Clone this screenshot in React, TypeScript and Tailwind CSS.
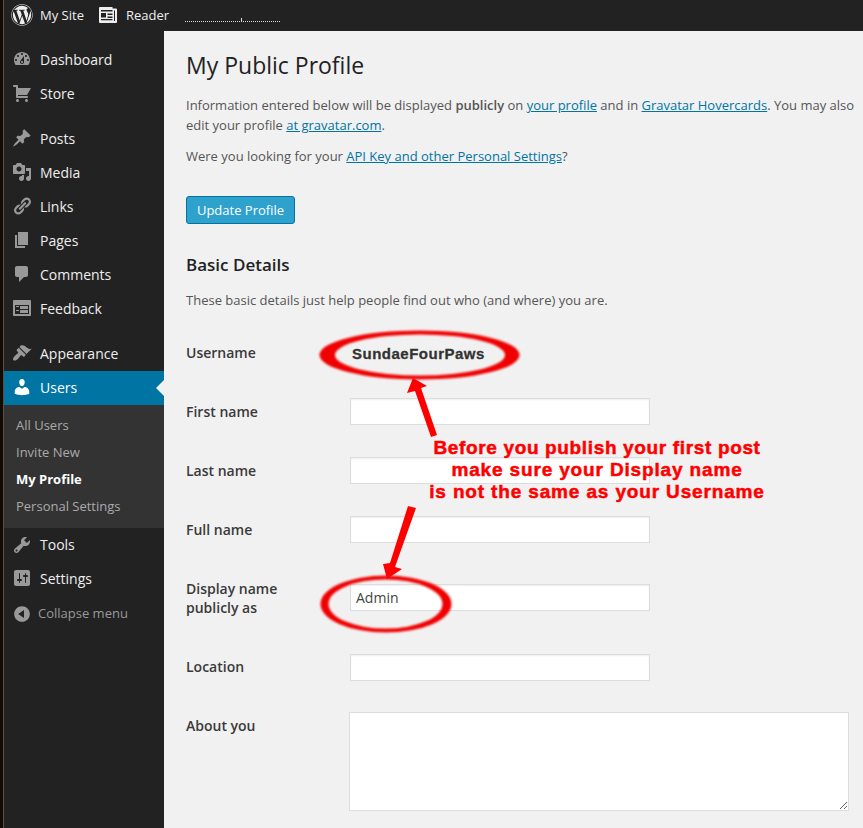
import React from "react";
import { FaWordpress } from "react-icons/fa";

const P: Record<string, string> = {
  dashboard: "M3.76 16h12.48c1.1-1.37 1.76-3.11 1.76-5 0-4.42-3.58-8-8-8s-8 3.58-8 8c0 1.89.66 3.63 1.76 5zM10 4c.55 0 1 .45 1 1s-.45 1-1 1-1-.45-1-1 .45-1 1-1zM6 6c.55 0 1 .45 1 1s-.45 1-1 1-1-.45-1-1 .45-1 1-1zm8 0c.55 0 1 .45 1 1s-.45 1-1 1-1-.45-1-1 .45-1 1-1zm-5.37 5.55L12 7v6c0 1.1-.9 2-2 2s-2-.9-2-2c0-.57.24-1.08.63-1.45zM4 10c.55 0 1 .45 1 1s-.45 1-1 1-1-.45-1-1 .45-1 1-1zm12 0c.55 0 1 .45 1 1s-.45 1-1 1-1-.45-1-1 .45-1 1-1zm-5 3c0-.55-.45-1-1-1s-1 .45-1 1 .45 1 1 1 1-.45 1-1z",
  cart: "M6 13h9c.55 0 1 .45 1 1s-.45 1-1 1H5c-.55 0-1-.45-1-1V4H2c-.55 0-1-.45-1-1s.45-1 1-1h3c.55 0 1 .45 1 1v2h13l-4 7H6v1zm-.5 3c.83 0 1.5.67 1.5 1.5S6.33 19 5.5 19 4 18.33 4 17.5 4.67 16 5.5 16zm9 0c.83 0 1.5.67 1.5 1.5s-.67 1.5-1.5 1.5-1.5-.67-1.5-1.5.67-1.5 1.5-1.5z",
  post: "M10.44 3.02l1.82-1.82 6.36 6.35-1.83 1.82c-1.05-.68-2.48-.57-3.41.36l-.75.75c-.92.93-1.04 2.35-.35 3.41l-1.83 1.82-2.41-2.41-2.8 2.79c-.42.42-3.38 2.71-3.8 2.29s1.86-3.39 2.28-3.81l2.79-2.79L4.1 9.36l1.83-1.82c1.05.69 2.48.57 3.4-.36l.75-.75c.93-.92 1.05-2.35.36-3.41z",
  media: "M13 11V4c0-.55-.45-1-1-1h-1.67L9 1H5L3.67 3H2c-.55 0-1 .45-1 1v7c0 .55.45 1 1 1h10c.55 0 1-.45 1-1zM7 4.5c1.38 0 2.5 1.12 2.5 2.5S8.38 9.5 7 9.5 4.5 8.38 4.5 7 5.62 4.5 7 4.5zM14 6h5v10.5c0 1.38-1.12 2.5-2.5 2.5S14 17.88 14 16.5s1.12-2.5 2.5-2.5c.17 0 .34.02.5.05V9h-3V6zm-4 8.05V13h2v3.5c0 1.38-1.12 2.5-2.5 2.5S7 17.88 7 16.5 8.12 14 9.5 14c.17 0 .34.02.5.05z",
  links: "M17.74 2.76c1.68 1.69 1.68 4.41 0 6.1l-1.53 1.52c-1.12 1.12-2.7 1.47-4.14 1.09l2.62-2.61.76-.77.76-.76c.84-.84.84-2.2 0-3.04-.84-.85-2.2-.85-3.04 0l-.77.76-3.38 3.38c-.37-1.44-.02-3.02 1.1-4.14l1.52-1.53c1.69-1.68 4.42-1.68 6.1 0zM8.59 13.43l5.34-5.34c.42-.42.42-1.1 0-1.52-.44-.43-1.13-.39-1.53 0l-5.33 5.34c-.42.42-.42 1.1 0 1.52.44.43 1.13.39 1.52 0zm-.76 2.29l4.14-4.15c.38 1.44.03 3.02-1.09 4.14l-1.52 1.53c-1.69 1.68-4.41 1.68-6.1 0-1.68-1.68-1.68-4.42 0-6.1l1.53-1.52c1.12-1.12 2.7-1.47 4.14-1.1l-4.14 4.15c-.85.84-.85 2.2 0 3.05.84.84 2.2.84 3.04 0z",
  page: "M6 15V2h10v13H6zm-1 1h8v2H3V5h2v11z",
  comments: "M5 2h9c1.1 0 2 .9 2 2v7c0 1.1-.9 2-2 2h-2l-5 5v-5H5c-1.1 0-2-.9-2-2V4c0-1.1.9-2 2-2z",
  feedback: "M2 2h16c.55 0 1 .45 1 1v14c0 .55-.45 1-1 1H2c-.55 0-1-.45-1-1V3c0-.55.45-1 1-1zm15 14V7H3v9h14zM4 8v1h3V8H4zm4 0v3h8V8H8zm-4 4v1h3v-1H4zm4 0v3h8v-3H8z",
  appearance: "M14.48 11.06L7.41 3.99l1.5-1.5c.5-.56 2.3-.47 3.51.32 1.21.8 1.43 1.28 2.91 2.1 1.18.64 2.45 1.26 4.45.85zm-.71.71L6.7 4.7 4.93 6.47c-.39.39-.39 1.02 0 1.41l1.06 1.06c.39.39.39 1.03 0 1.42-.6.6-1.43 1.11-2.21 1.69-.35.26-.7.53-1.01.84-1.35 1.34-1.77 2.71-1.77 3.61 0 .5 1 1 1.5 1 .9 0 2.3-.42 3.6-1.77.31-.31.58-.66.84-1.01.58-.78 1.09-1.61 1.69-2.21.39-.39 1.02-.39 1.41 0l1.06 1.06c.39.39 1.02.39 1.41 0z",
  users: "M10 9.25c-2.27 0-2.73-3.44-2.73-3.44C7 4.02 7.82 2 9.97 2c2.16 0 2.98 2.02 2.71 3.81 0 0-.41 3.44-2.68 3.44zm0 2.57L12.72 10c2.39 0 4.52 2.33 4.52 4.53v2.49s-3.65 1.13-7.24 1.13c-3.65 0-7.24-1.13-7.24-1.13v-2.49c0-2.25 1.94-4.48 4.47-4.48z",
  tools: "M16.68 9.77c-1.34 1.34-3.3 1.67-4.95.99l-5.41 6.52c-.99.99-2.59.99-3.58 0s-.99-2.59 0-3.57l6.52-5.42c-.68-1.65-.35-3.61.99-4.95 1.28-1.28 3.12-1.62 4.72-1.06l-2.89 2.89 2.82 2.82 2.86-2.87c.53 1.58.18 3.39-1.08 4.65zM3.81 16.21c.4.39 1.04.39 1.43 0 .4-.4.4-1.04 0-1.43-.39-.4-1.03-.4-1.43 0-.39.39-.39 1.03 0 1.43z",
  settings: "M18 16V4c0-1.1-.9-2-2-2H4c-1.1 0-2 .9-2 2v12c0 1.1.9 2 2 2h12c1.1 0 2-.9 2-2zM8 11h1c.55 0 1 .45 1 1s-.45 1-1 1H8v1.5c0 .28-.22.5-.5.5s-.5-.22-.5-.5V13H6c-.55 0-1-.45-1-1s.45-1 1-1h1V5.5c0-.28.22-.5.5-.5s.5.22.5.5V11zm5-2h-1c-.55 0-1-.45-1-1s.45-1 1-1h1V5.5c0-.28.22-.5.5-.5s.5.22.5.5V7h1c.55 0 1 .45 1 1s-.45 1-1 1h-1v5.5c0 .28-.22.5-.5.5s-.5-.22-.5-.5V9z",
  collapse: "M10 2.16c4.33 0 7.84 3.51 7.84 7.84s-3.51 7.84-7.84 7.84S2.16 14.33 2.16 10 5.71 2.16 10 2.16zm2 11.72V6.12L6.18 9.97z",
};

function Icon({ n, className }: { n: string; className: string }) {
  return (
    <svg viewBox="0 0 20 20" className={"w-5 h-5 shrink-0 fill-current " + className}>
      <path d={P[n]} />
    </svg>
  );
}

function MenuItem({ icon, label, className = "h-[34px]" }: { icon: string; label: string; className?: string }) {
  return (
    <div className={"flex items-center pl-2 gap-2 text-[14px] text-[#eeeeee] " + className}>
      <Icon n={icon} className="text-[#999999]" />
      <span>{label}</span>
    </div>
  );
}

const labelCls = "w-[164px] shrink-0 pt-[4px] text-[14px] font-semibold text-[#3a3a3a] leading-[20px]";
const inputCls = "block w-[300px] h-[27px] bg-white border border-[#dddddd] shadow-[inset_0_1px_2px_rgba(0,0,0,0.07)] outline-none text-[14px] text-[#444444] px-[5px]";

function Field({ label, labelClass = "" }: { label: string; labelClass?: string }) {
  return (
    <div className="flex h-[27px]">
      <label className={labelCls + " " + labelClass}>{label}</label>
      <input className={inputCls} readOnly />
    </div>
  );
}

const ring = (cx: number, cy: number, rx: number, ry: number) =>
  `M${cx - rx} ${cy}a${rx} ${ry} 0 1 0 ${2 * rx} 0a${rx} ${ry} 0 1 0 ${-2 * rx} 0z`;

export default function App() {
  return (
    <div className="relative w-[863px] h-[828px] overflow-hidden flex bg-[#222222] font-['Open_Sans',sans-serif]">
      <div className="w-[4px] shrink-0 bg-[#0c0c0c] border-r border-[#6b4a24]" />
      <div className="flex-1 flex flex-col min-w-0">
        <header className="h-[31px] shrink-0 relative flex items-center text-[13px] text-[#eeeeee] bg-[#222222]">
          <FaWordpress className="ml-[7px] w-[22px] h-[22px] text-[#eeeeee] -mt-[1px]" />
          <span className="ml-[7px]">My Site</span>
          <svg viewBox="0 0 18 16" className="ml-[15px] w-[18px] h-[16px] shrink-0 -mt-[1px]">
            <path fill="#eeeeee" d="M1 0h12.5v1.5H17a1 1 0 0 1 1 1V15a1 1 0 0 1-1 1H1a1 1 0 0 1-1-1V1a1 1 0 0 1 1-1z" />
            <path fill="#222222" d="M2 3h11.5v1.5H2zM2 6h5v4.5H2zM8.5 6.5h5V8h-5zM8.5 9.5h5V11h-5zM2 12h11.5v1.2H2zM15 3.5h1V14h-1z" />
          </svg>
          <span className="ml-[9px]">Reader</span>
          <div className="absolute left-[181px] top-[21px] w-[95px] border-t border-dotted border-[#dddddd]" />
          <div className="absolute left-[237px] top-[18px] h-[3px] w-px bg-[#dddddd]" />
        </header>
        <div className="flex flex-1 min-h-0">
          <nav className="w-[160px] shrink-0 pt-[11px] flex flex-col">
            <MenuItem icon="dashboard" label="Dashboard" />
            <MenuItem icon="cart" label="Store" />
            <div className="h-[11px]" />
            <MenuItem icon="post" label="Posts" />
            <MenuItem icon="media" label="Media" />
            <MenuItem icon="links" label="Links" />
            <MenuItem icon="page" label="Pages" />
            <MenuItem icon="comments" label="Comments" />
            <MenuItem icon="feedback" label="Feedback" />
            <div className="h-[11px]" />
            <MenuItem icon="appearance" label="Appearance" className="h-[35px] pb-[1px]" />
            <div className="relative h-[34px] pb-[2px] flex items-center pl-2 gap-2 text-[14px] text-white bg-[#0074a2]">
              <Icon n="users" className="text-white" />
              <span>Users</span>
              <div className="absolute right-0 top-[9px] border-y-[8px] border-r-[8px] border-y-transparent border-r-[#f1f1f1]" />
            </div>
            <div className="bg-[#333333] pt-[7px] pb-[8px] pl-3 text-[13px] text-[#aaaaaa] flex flex-col">
              <div className="h-[27px] leading-[26px]">All Users</div>
              <div className="h-[27px] leading-[26px]">Invite New</div>
              <div className="h-[27px] leading-[26px] font-bold text-white">My Profile</div>
              <div className="h-[27px] leading-[26px]">Personal Settings</div>
            </div>
            <MenuItem icon="tools" label="Tools" className="h-[33px]" />
            <MenuItem icon="settings" label="Settings" />
            <div className="mt-[2px] h-[34px] flex items-center pl-2 gap-[6px] text-[13px] text-[#999999]">
              <Icon n="collapse" className="text-[#999999]" />
              <span>Collapse menu</span>
            </div>
          </nav>
          <main className="flex-1 min-w-0 bg-[#f1f1f1] pl-[22px] text-[13px] leading-[20px] text-[#555555]">
            <h1 className="mt-[18px] text-[23px] leading-[33px] text-[#222222]">My Public Profile</h1>
            <p className="mt-[13px] w-[680px]">
              Information entered below will be displayed <b className="font-semibold">publicly</b> on <a className="underline text-[#0074a2]">your profile</a> and in <a className="underline text-[#0074a2]">Gravatar Hovercards</a>. You may also edit your profile <a className="underline text-[#0074a2]">at gravatar.com</a>.
            </p>
            <p className="mt-[11px]">
              Were you looking for your <a className="underline text-[#0074a2]">API Key and other Personal Settings</a>?
            </p>
            <button className="mt-[30px] block w-[109px] h-[28px] rounded-[3px] bg-[#2ea2cc] border border-[#0074a2] text-white text-[13px] leading-[26px] text-center">Update Profile</button>
            <h2 className="mt-[29px] text-[17px] leading-[24px] font-semibold text-[#222222]">Basic Details</h2>
            <p className="mt-[13px]">These basic details just help people find out who (and where) you are.</p>
            <form className="mt-[29px] flex flex-col gap-[32px]">
              <div className="flex h-[27px]">
                <label className={labelCls}>Username</label>
              </div>
              <Field label="First name" />
              <Field label="Last name" />
              <Field label="Full name" />
              <div className="flex h-[47px]">
                <label className={labelCls + " !leading-[19px]"}>Display name<br />publicly as</label>
                <input className={inputCls + " mt-[9px]"} readOnly value="Admin" />
              </div>
              <Field label="Location" labelClass="!pt-[3px]" />
              <div className="flex -mt-[1px]">
                <label className="w-[163px] shrink-0 pt-[4px] text-[14px] font-semibold text-[#3a3a3a] leading-[20px]">About you</label>
                <textarea readOnly className="block w-[500px] h-[99px] bg-white border border-[#dddddd] outline-none" />
              </div>
            </form>
          </main>
        </div>
      </div>
      <svg className="absolute left-0 top-0 w-[863px] h-[828px] pointer-events-none" viewBox="0 0 863 828">
        <defs>
          <filter id="soft" x="-10%" y="-20%" width="120%" height="140%">
            <feGaussianBlur stdDeviation="0.8" />
          </filter>
        </defs>
        <path fillRule="evenodd" fill="#f00000" filter="url(#soft)" d={ring(419.5, 355, 100, 24.5) + ring(420, 355, 85, 20.5)} />
        <path fillRule="evenodd" fill="#f00000" filter="url(#soft)" d={ring(386, 604, 65.5, 28.5) + ring(385.5, 604, 57, 24.5)} />
        <polygon fill="#ff0000" points="413,378 427,386 421,388 437,435 431,437 415,391 407,393" />
        <polygon fill="#ff0000" points="387,579 402,569 395,567 416,508 408,506 390,563 383,564" />
      </svg>
      <div className="absolute left-[401px] top-[437px] w-[392px] text-center font-['Liberation_Sans',sans-serif] font-bold text-[19px] leading-[22px] text-[#ff0000] [-webkit-text-stroke:0.5px_#ff0000]">
        <div className="tracking-[0.65px]">Before you publish your first post</div>
        <div className="tracking-[0.85px]">make sure your Display name</div>
        <div className="tracking-[0.85px]">is not the same as your Username</div>
      </div>
      <div className="absolute left-[352px] top-[345px] font-['Liberation_Sans',sans-serif] font-bold text-[15px] leading-[18px] tracking-[0.5px] text-[#333333] [-webkit-text-stroke:0.3px_#333333]">SundaeFourPaws</div>
    </div>
  );
}
